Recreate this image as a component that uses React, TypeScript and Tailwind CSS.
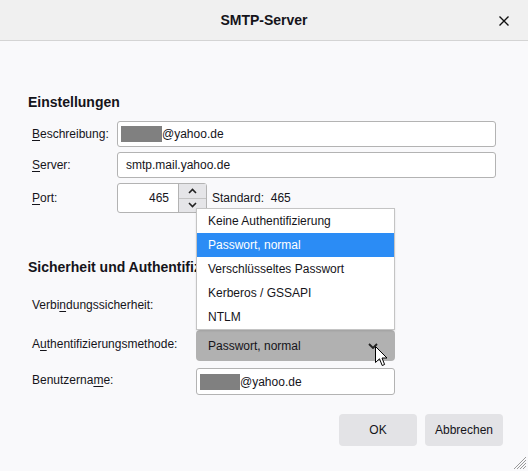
import React from "react";

const U = ({ children }: { children: React.ReactNode }) => <span className="underline underline-offset-2">{children}</span>;

const Redact = ({ w }: { w: string }) => <span className={`inline-block h-[16px] bg-[#808080] ${w}`} />;

export default function App() {
  return (
    <div className="relative w-[528px] h-[471px] bg-[#f9f9fb] overflow-hidden text-[#15141a] text-[12px] font-['Liberation_Sans',Arial,sans-serif]">
      {/* Title bar */}
      <div className="relative h-[41px] bg-[#f0f0f0] border-b border-[#d4d4d4] flex items-center justify-center">
        <span className="text-[14px] font-bold">SMTP-Server</span>
        <svg className="absolute right-[19px] top-[16px]" width="10" height="10" viewBox="0 0 10 10">
          <path d="M0.5 0.5 L9.5 9.5 M9.5 0.5 L0.5 9.5" stroke="#111" strokeWidth="1.4" />
        </svg>
      </div>

      <div className="pl-[28px] pt-[51px]">
        {/* Section 1 */}
        <div className="text-[14px] font-bold leading-[20px]">Einstellungen</div>
        <div className="mt-[9px] ml-[4px] grid grid-cols-[85px_379px] gap-y-[5px] items-center">
          <div><U>B</U>eschreibung:</div>
          <div className="h-[26px] bg-white border border-[#b3b3b3] rounded-[3px] flex items-center pl-[3px]">
            <Redact w="w-[41px]" />
            <span>@yahoo.de</span>
          </div>
          <div><U>S</U>erver:</div>
          <div className="h-[26px] bg-white border border-[#b3b3b3] rounded-[3px] flex items-center pl-[8px]">smtp.mail.yahoo.de</div>
          <div><U>P</U>ort:</div>
          <div className="flex items-center">
            <div className="h-[30px] w-[90px] bg-white border border-[#b3b3b3] rounded-[3px] flex">
              <div className="flex-1 flex items-center justify-end pr-[9px]">465</div>
              <div className="w-[28px] flex flex-col border-l border-[#b3b3b3] bg-[#e5e5e8]">
                <div className="flex-1 flex items-center justify-center border-b border-[#c4c4c4]">
                  <svg width="9" height="6" viewBox="0 0 9 6"><path d="M1 5 L4.5 1.5 L8 5" stroke="#222" strokeWidth="1.6" fill="none" /></svg>
                </div>
                <div className="flex-1 flex items-center justify-center">
                  <svg width="9" height="6" viewBox="0 0 9 6"><path d="M1 1 L4.5 4.5 L8 1" stroke="#222" strokeWidth="1.6" fill="none" /></svg>
                </div>
              </div>
            </div>
            <span className="ml-[5px] whitespace-pre">Standard:  465</span>
          </div>
        </div>

        {/* Section 2 */}
        <div className="mt-[44px] w-[168px] overflow-hidden whitespace-nowrap text-[14px] font-bold leading-[20px]">Sicherheit und Authentifizierung</div>
        <div className="mt-[14px] ml-[4px] grid grid-cols-[164px_199px] items-center">
          <div className="pb-[4px]">Verbi<U>n</U>dungssicherheit:</div>
          <div className="h-[31px] bg-[#e3e3e6] rounded-[4px]" />
          <div className="pb-[4px] mt-[8px]">A<U>u</U>thentifizierungsmethode:</div>
          <div className="mt-[8px] h-[31px] bg-[#b1b1b1] rounded-[4px] flex items-center pl-[12px] relative">
            <span>Passwort, normal</span>
            <svg className="absolute left-[172px] top-[13px]" width="10" height="6" viewBox="0 0 10 6"><path d="M1 1 L5 5 L9 1" stroke="#222" strokeWidth="1.8" fill="none" /></svg>
          </div>
          <div className="pb-[4px] mt-[7px]">Benutzerna<U>m</U>e:</div>
          <div className="mt-[7px] h-[27px] bg-white border border-[#b3b3b3] rounded-[3px] flex items-center pl-[3px]">
            <Redact w="w-[40px]" />
            <span>@yahoo.de</span>
          </div>
        </div>

        {/* Buttons */}
        <div className="mt-[19px] mr-[25px] flex justify-end gap-[8px]">
          <button className="w-[78px] h-[32px] bg-[#e3e3e6] rounded-[4px] text-[12px]">OK</button>
          <button className="w-[78px] h-[32px] bg-[#e3e3e6] rounded-[4px] text-[12px]">Abbrechen</button>
        </div>
      </div>

      {/* Dropdown popup */}
      <div className="absolute left-[196px] top-[208px] w-[199px] bg-white border border-[#c4c4c4] shadow-[0_1px_2px_rgba(0,0,0,0.1)]">
        {["Keine Authentifizierung", "Passwort, normal", "Verschlüsseltes Passwort", "Kerberos / GSSAPI", "NTLM"].map((t, i) => (
          <div key={t} className={`h-[24px] flex items-center pl-[11px] ${i === 1 ? "bg-[#2b8cf5] text-white" : ""}`}>{t}</div>
        ))}
      </div>

      {/* Mouse cursor */}
      <svg className="absolute left-[375px] top-[346px]" width="13" height="21" viewBox="0 0 13 21">
        <path d="M0.5 0.5 L0.5 16.5 L4.5 12.8 L7.2 19.5 L9.6 18.5 L7 12 L12 12 Z" fill="#fff" stroke="#000" strokeWidth="1" strokeLinejoin="round" />
      </svg>

      {/* Resize grip */}
      <svg className="absolute right-[1px] bottom-[1px]" width="14" height="14" viewBox="0 0 14 14">
        <path d="M13 4 L4 13 M13 7 L7 13 M13 10 L10 13 M13 1 L1 13" stroke="#9a9a9a" strokeWidth="1" />
      </svg>
    </div>
  );
}
